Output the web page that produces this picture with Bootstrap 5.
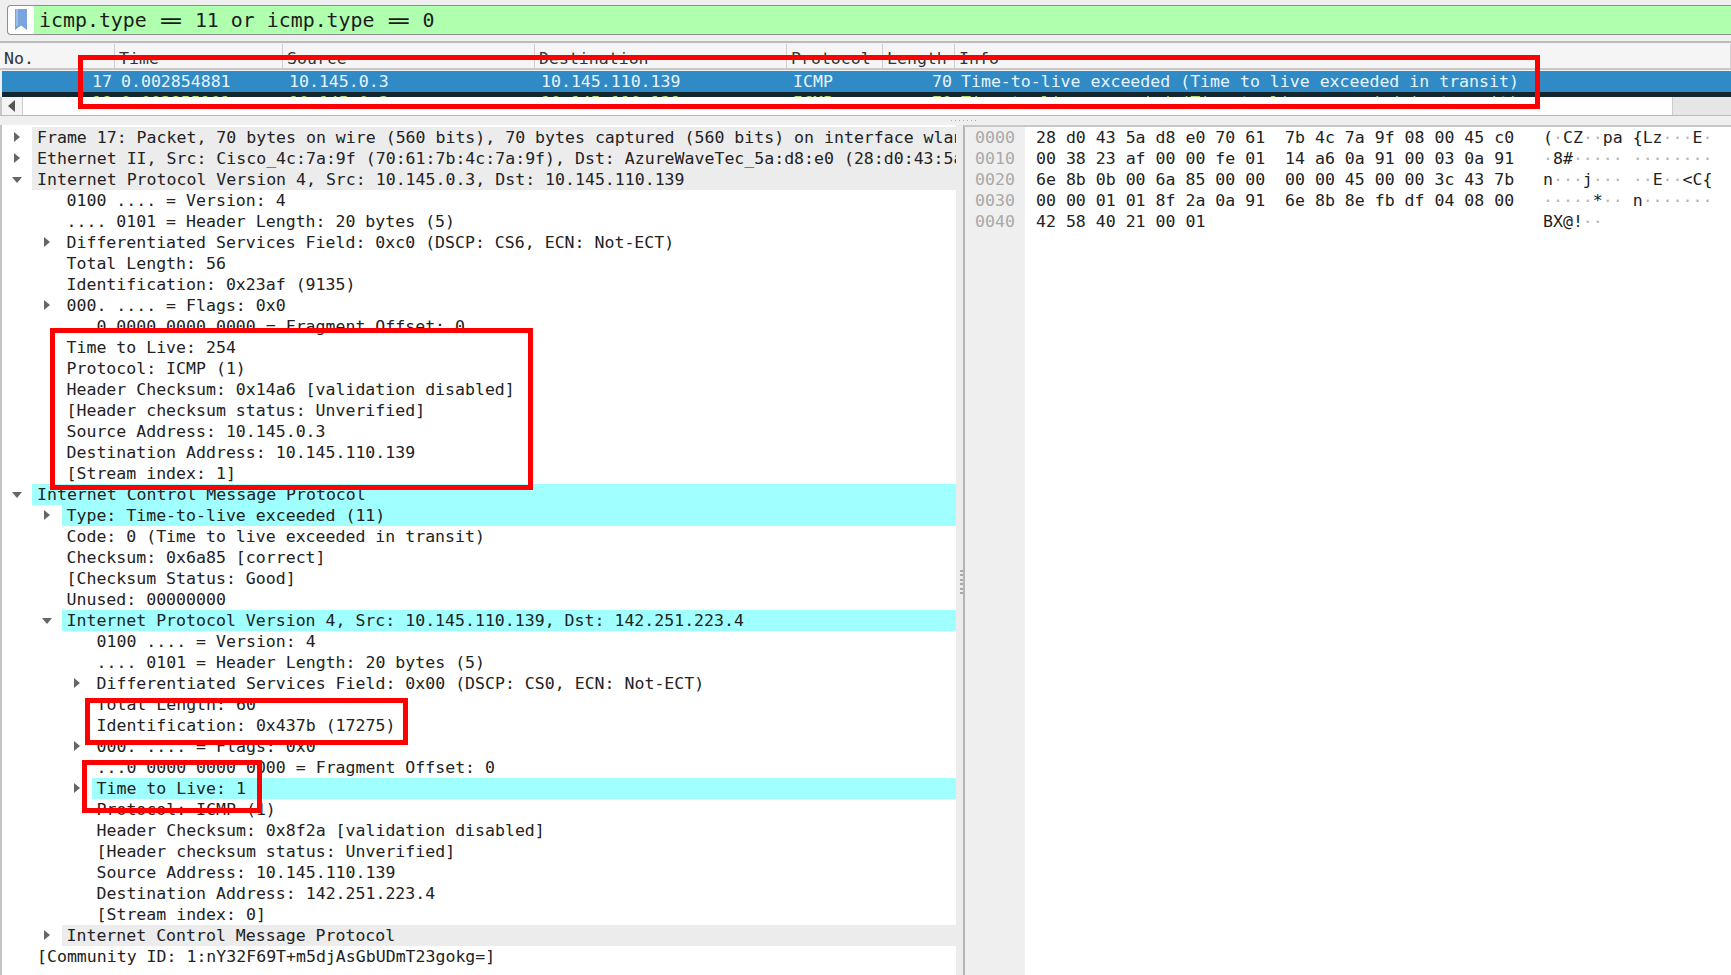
<!DOCTYPE html>
<html lang="en"><head><meta charset="utf-8"><title>Wireshark</title>
<link href="https://cdn.jsdelivr.net/npm/bootstrap@5.3.0/dist/css/bootstrap.min.css" rel="stylesheet">
<style>
html,body{height:100%;margin:0;overflow:hidden}
.ws-app{position:relative;width:1731px;height:975px;overflow:hidden;background:#efefef;font-family:"DejaVu Sans Mono",monospace;font-size:16.56px;line-height:21px;color:#222;white-space:nowrap}
.ws-filter{height:30px;margin:5px 0 0 7px;border:1px solid #8e8e8e;border-right:0;border-radius:4px 0 0 4px;background:#fff}
.ws-mark{width:26px}
.ws-input{background:#afffaf;font-size:19.9px;padding-left:5px;line-height:29px;color:#1c1c1c}
.ws-eq{letter-spacing:-2.4px;padding:0 3.6px 0 1.4px}
.ws-rule{height:2px;background:#bdbdbd;margin-top:6px}
.ws-head{height:26px;margin-top:1px;background:#f5f5f5;border-bottom:2px solid #c8c8c8;line-height:29px;color:#333}
.ws-head>div{border-right:1px solid #cfcfcf;padding-left:4px;height:24px}
.ws-c1{width:115px}.ws-c2{width:168px}.ws-c3{width:252px}.ws-c4{width:252px}.ws-c5{width:96px}.ws-c6{width:72px}
.ws-pkt{height:21px;margin-top:1px;margin-left:2px;background:#2f8ac6;color:#eaf4fb}
.ws-pkt2{height:5px;margin-left:2px;background:#12272f;color:#b6d86c;overflow:hidden}
.ws-pkt .ws-c1,.ws-pkt2 .ws-c1{width:113px}
.ws-pkt>div,.ws-pkt2>div{padding-left:6px}
.ws-pkt .ws-r,.ws-pkt2 .ws-r{text-align:right;padding:0 3px 0 0}
.ws-pkt>.flex-grow-1,.ws-pkt2>.flex-grow-1{padding-left:6px}
.ws-bar{height:19px;background:#fff;border-bottom:1px solid #bbb}
.ws-btn{width:23px;background:#f4f4f4;border-right:1px solid #ccc;border-left:2px solid #c8c8c8}
.ws-rest{width:59px;background:#e6e6e6;border-left:1px solid #ccc}
.ws-grip{height:9px}
.ws-dots{width:28px;height:1px;margin-left:951px;position:relative;top:4px;background:repeating-linear-gradient(90deg,#aaa 0 1px,transparent 1px 4px)}
.ws-panes{height:850px}
.ws-tree{width:956px;background:#fff;border-left:2px solid #c4c4c4;overflow:hidden;padding-top:2px}
.ws-gap{width:7px;background:#ececec}
.ws-gap i{display:block;width:3px;height:26px;margin:445px 0 0 4px;background:repeating-linear-gradient(#aaa 0 2px,transparent 2px 4.5px)}
.ws-hex{flex:1;background:#fff;border-left:2px solid #b4b4b4;border-top:2px solid #c8c8c8;overflow:hidden}
.ws-off{width:60px;background:#efefef;color:#a9a9a9;padding-left:10px;white-space:pre}
.ws-bytes{padding-left:11px;width:518px;white-space:pre}
.ws-asc{white-space:pre}
.ws-asc i{font-style:normal;color:#b5b5b5}
.ws-row{height:21px;overflow:hidden;position:relative;padding-left:var(--x)}
.ws-l0{--x:35px}.ws-l1{--x:64.5px}.ws-l2{--x:94.5px}
.ws-g::before,.ws-cy::before{content:"";position:absolute;top:0;bottom:0;right:0}
.ws-g::before{background:#ececec}.ws-cy::before{background:#a0ffff}
.ws-l0::before{left:30px}.ws-l1::before{left:60px}.ws-l2::before{left:90px}
.ws-row span{position:relative;white-space:pre}
.ws-tw::after{content:"";position:absolute;top:5px;left:calc(var(--x) - 23px);border-style:solid;border-width:5.5px 0 5.5px 6px;border-color:transparent transparent transparent #666}
.ws-op::after{content:"";position:absolute;top:8px;left:calc(var(--x) - 25px);border-style:solid;border-width:6px 5.5px 0;border-color:#666 transparent transparent}
.ws-red{position:absolute;border:5px solid #f00;pointer-events:none}
.ws-r1{left:78px;top:55px;width:1462px;height:54px}
.ws-r2{left:50px;top:328px;width:483px;height:162px}
.ws-r3{left:85px;top:698px;width:323px;height:47px}
.ws-r4{left:82px;top:760px;width:180px;height:53px}
</style></head>
<body>
<div class="ws-app">
  <div class="ws-filter d-flex">
    <div class="ws-mark d-flex justify-content-center align-items-center">
      <svg width="14" height="22" viewBox="0 0 14 22"><path d="M1 0H13V21L7 16.5 1 21Z" fill="#7aa5dc"/><path d="M3 0V17" stroke="#a9c6ea" stroke-width="1.5"/></svg>
    </div>
    <div class="ws-input flex-grow-1">icmp.type <span class="ws-eq">==</span> 11 or icmp.type <span class="ws-eq">==</span> 0</div>
  </div>
  <div class="ws-rule"></div>
  <div class="ws-head d-flex">
    <div class="ws-c1">No.</div><div class="ws-c2">Time</div><div class="ws-c3">Source</div><div class="ws-c4">Destination</div><div class="ws-c5">Protocol</div><div class="ws-c6">Length</div><div class="flex-grow-1">Info</div>
  </div>
  <div class="ws-pkt d-flex">
    <div class="ws-c1 ws-r">17</div><div class="ws-c2">0.002854881</div><div class="ws-c3">10.145.0.3</div><div class="ws-c4">10.145.110.139</div><div class="ws-c5">ICMP</div><div class="ws-c6 ws-r">70</div><div class="flex-grow-1">Time-to-live exceeded (Time to live exceeded in transit)</div>
  </div>
  <div class="ws-pkt2 d-flex">
    <div class="ws-c1 ws-r">18</div><div class="ws-c2">0.003855101</div><div class="ws-c3">10.145.0.3</div><div class="ws-c4">10.145.110.139</div><div class="ws-c5">ICMP</div><div class="ws-c6 ws-r">70</div><div class="flex-grow-1">Time-to-live exceeded (Time to live exceeded in transit)</div>
  </div>
  <div class="ws-bar d-flex">
    <div class="ws-btn d-flex align-items-center justify-content-center"><svg width="8" height="12" viewBox="0 0 8 12"><path d="M7 0V12L0 6Z" fill="#555"/></svg></div>
    <div class="flex-grow-1"></div>
    <div class="ws-rest"></div>
  </div>
  <div class="ws-grip"><div class="ws-dots"></div></div>
  <div class="ws-panes d-flex">
    <div class="ws-tree">
      <div class="ws-row ws-l0 ws-g ws-tw"><span>Frame 17: Packet, 70 bytes on wire (560 bits), 70 bytes captured (560 bits) on interface wlan0, id 0</span></div>
      <div class="ws-row ws-l0 ws-g ws-tw"><span>Ethernet II, Src: Cisco_4c:7a:9f (70:61:7b:4c:7a:9f), Dst: AzureWaveTec_5a:d8:e0 (28:d0:43:5a:d8:e0)</span></div>
      <div class="ws-row ws-l0 ws-g ws-op"><span>Internet Protocol Version 4, Src: 10.145.0.3, Dst: 10.145.110.139</span></div>
      <div class="ws-row ws-l1"><span>0100 .... = Version: 4</span></div>
      <div class="ws-row ws-l1"><span>.... 0101 = Header Length: 20 bytes (5)</span></div>
      <div class="ws-row ws-l1 ws-tw"><span>Differentiated Services Field: 0xc0 (DSCP: CS6, ECN: Not-ECT)</span></div>
      <div class="ws-row ws-l1"><span>Total Length: 56</span></div>
      <div class="ws-row ws-l1"><span>Identification: 0x23af (9135)</span></div>
      <div class="ws-row ws-l1 ws-tw"><span>000. .... = Flags: 0x0</span></div>
      <div class="ws-row ws-l1"><span>   0 0000 0000 0000 = Fragment Offset: 0</span></div>
      <div class="ws-row ws-l1"><span>Time to Live: 254</span></div>
      <div class="ws-row ws-l1"><span>Protocol: ICMP (1)</span></div>
      <div class="ws-row ws-l1"><span>Header Checksum: 0x14a6 [validation disabled]</span></div>
      <div class="ws-row ws-l1"><span>[Header checksum status: Unverified]</span></div>
      <div class="ws-row ws-l1"><span>Source Address: 10.145.0.3</span></div>
      <div class="ws-row ws-l1"><span>Destination Address: 10.145.110.139</span></div>
      <div class="ws-row ws-l1"><span>[Stream index: 1]</span></div>
      <div class="ws-row ws-l0 ws-cy ws-op"><span>Internet Control Message Protocol</span></div>
      <div class="ws-row ws-l1 ws-cy ws-tw"><span>Type: Time-to-live exceeded (11)</span></div>
      <div class="ws-row ws-l1"><span>Code: 0 (Time to live exceeded in transit)</span></div>
      <div class="ws-row ws-l1"><span>Checksum: 0x6a85 [correct]</span></div>
      <div class="ws-row ws-l1"><span>[Checksum Status: Good]</span></div>
      <div class="ws-row ws-l1"><span>Unused: 00000000</span></div>
      <div class="ws-row ws-l1 ws-cy ws-op"><span>Internet Protocol Version 4, Src: 10.145.110.139, Dst: 142.251.223.4</span></div>
      <div class="ws-row ws-l2"><span>0100 .... = Version: 4</span></div>
      <div class="ws-row ws-l2"><span>.... 0101 = Header Length: 20 bytes (5)</span></div>
      <div class="ws-row ws-l2 ws-tw"><span>Differentiated Services Field: 0x00 (DSCP: CS0, ECN: Not-ECT)</span></div>
      <div class="ws-row ws-l2"><span>Total Length: 60</span></div>
      <div class="ws-row ws-l2"><span>Identification: 0x437b (17275)</span></div>
      <div class="ws-row ws-l2 ws-tw"><span>000. .... = Flags: 0x0</span></div>
      <div class="ws-row ws-l2"><span>...0 0000 0000 0000 = Fragment Offset: 0</span></div>
      <div class="ws-row ws-l2 ws-cy ws-tw"><span>Time to Live: 1</span></div>
      <div class="ws-row ws-l2"><span>Protocol: ICMP (1)</span></div>
      <div class="ws-row ws-l2"><span>Header Checksum: 0x8f2a [validation disabled]</span></div>
      <div class="ws-row ws-l2"><span>[Header checksum status: Unverified]</span></div>
      <div class="ws-row ws-l2"><span>Source Address: 10.145.110.139</span></div>
      <div class="ws-row ws-l2"><span>Destination Address: 142.251.223.4</span></div>
      <div class="ws-row ws-l2"><span>[Stream index: 0]</span></div>
      <div class="ws-row ws-l1 ws-g ws-tw"><span>Internet Control Message Protocol</span></div>
      <div class="ws-row ws-l0"><span>[Community ID: 1:nY32F69T+m5djAsGbUDmT23gokg=]</span></div>
    </div>
    <div class="ws-gap"><i></i></div>
    <div class="ws-hex d-flex">
      <div class="ws-off">0000
0010
0020
0030
0040</div>
      <div class="ws-bytes">28 d0 43 5a d8 e0 70 61  7b 4c 7a 9f 08 00 45 c0
00 38 23 af 00 00 fe 01  14 a6 0a 91 00 03 0a 91
6e 8b 0b 00 6a 85 00 00  00 00 45 00 00 3c 43 7b
00 00 01 01 8f 2a 0a 91  6e 8b 8e fb df 04 08 00
42 58 40 21 00 01</div>
      <div class="ws-asc">(<i>·</i>CZ<i>··</i>pa {Lz<i>···</i>E<i>·</i>
<i>·</i>8#<i>·····</i> <i>········</i>
n<i>···</i>j<i>···</i> <i>··</i>E<i>··</i>&lt;C{
<i>·····</i>*<i>··</i> n<i>·······</i>
BX@!<i>··</i></div>
    </div>
  </div>
  <div class="ws-red ws-r1"></div>
  <div class="ws-red ws-r2"></div>
  <div class="ws-red ws-r3"></div>
  <div class="ws-red ws-r4"></div>
</div>
<script src="https://cdn.jsdelivr.net/npm/bootstrap@5.3.0/dist/js/bootstrap.bundle.min.js"></script>
</body></html>
